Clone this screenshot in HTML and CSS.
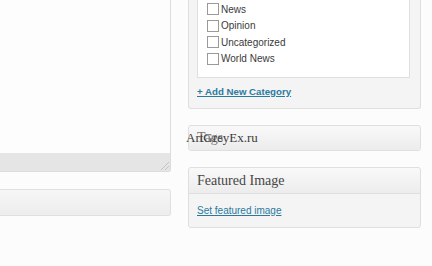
FILE: index.html
```html
<!DOCTYPE html>
<html>
<head>
<meta charset="utf-8">
<link rel="stylesheet" href="styles.css">
</head>
<body>
<div class="page">
  <div class="main">
    <div class="editor"></div>
    <div class="status"><span class="grip"></span></div>
    <div class="bar"></div>
  </div>
  <div class="side">
    <div class="box cats">
      <ul class="catlist">
        <li><span class="cb"></span>News</li>
        <li><span class="cb"></span>Opinion</li>
        <li><span class="cb"></span>Uncategorized</li>
        <li><span class="cb"></span>World News</li>
      </ul>
      <a class="addnew" href="#">+ Add New Category</a>
    </div>
    <div class="box tags">
      <h3 class="hndle tagsh">Tags</h3>
      <span class="mark">ArtGreyEx.ru</span>
    </div>
    <div class="box featured">
      <h3 class="hndle fh">Featured Image</h3>
      <div class="inside"><a class="link" href="#">Set featured image</a></div>
    </div>
  </div>
</div>
</body>
</html>
```
FILE: styles.css
```css
html, body { margin: 0; padding: 0; }
body {
  background: #fcfcfc;
  font-family: "Liberation Sans", Arial, sans-serif;
  color: #333;
  width: 432px;
  height: 266px;
  overflow: hidden;
}
.page { display: flex; gap: 17px; align-items: flex-start; }
.main { width: 171px; display: flex; flex-direction: column; }
.editor {
  height: 153px;
  background: #fdfdfd;
  border-right: 1px solid #dcdcdc;
  box-sizing: border-box;
}
.status {
  position: relative;
  height: 18px;
  background: #e5e5e5;
  border-right: 1px solid #dcdcdc;
  border-bottom: 1px solid #dcdcdc;
  border-bottom-right-radius: 3px;
}
.grip {
  position: absolute;
  right: 1px;
  bottom: 1px;
  width: 10px;
  height: 10px;
  background: repeating-linear-gradient(135deg, transparent 0 2px, #c4c4c4 2px 3px);
  clip-path: polygon(100% 0, 100% 100%, 0 100%);
}
.bar {
  margin-top: 17px;
  height: 25px;
  border: 1px solid #e0e0e0;
  border-left: none;
  border-radius: 0 3px 3px 0;
  background: linear-gradient(#f6f6f6, #ededed);
}
.side { width: 233px; display: flex; flex-direction: column; }
.box {
  position: relative;
  border: 1px solid #dfdfdf;
  border-radius: 3px;
  background: #f4f4f4;
}
.cats {
  border-top: none;
  border-radius: 0 0 3px 3px;
  padding: 0 10px 10px 8px;
}
.catlist {
  list-style: none;
  margin: 0;
  padding: 0.75px 0 10px 9px;
  background: #fff;
  border: 1px solid #dfdfdf;
  border-top: none;
}
.catlist li {
  height: 16.5px;
  display: flex;
  align-items: center;
  font-size: 10px;
  color: #3a3a3a;
}
.cb {
  width: 10px;
  height: 10px;
  border: 1px solid #999;
  background: #fff;
  margin-right: 2px;
  flex: none;
}
.addnew {
  display: block;
  margin-top: 8px;
  line-height: 12px;
  font-size: 9.7px;
  font-weight: bold;
  color: #2a7aa0;
  text-decoration: underline;
}
.hndle {
  margin: 0;
  font-family: "Liberation Serif", "Times New Roman", serif;
  font-weight: normal;
  font-size: 14px;
  color: #464646;
  padding-left: 8px;
  background: linear-gradient(#f9f9f9, #ececec);
}
.tags { margin-top: 16px; }
.tagsh { height: 24px; line-height: 24px; color: #777; border-radius: 3px; }
.mark {
  position: absolute;
  left: -3px;
  top: 3px;
  font-family: "Liberation Serif", "Times New Roman", serif;
  font-size: 13px;
  color: #3c3c3c;
  line-height: 18px;
}
.featured { margin-top: 16px; }
.fh {
  height: 25px;
  line-height: 25px;
  border-bottom: 1px solid #dfdfdf;
  border-radius: 3px 3px 0 0;
}
.inside { height: 33px; display: flex; align-items: center; padding-left: 8px; }
.link { font-size: 10px; color: #2a7aa0; text-decoration: underline; }
```
